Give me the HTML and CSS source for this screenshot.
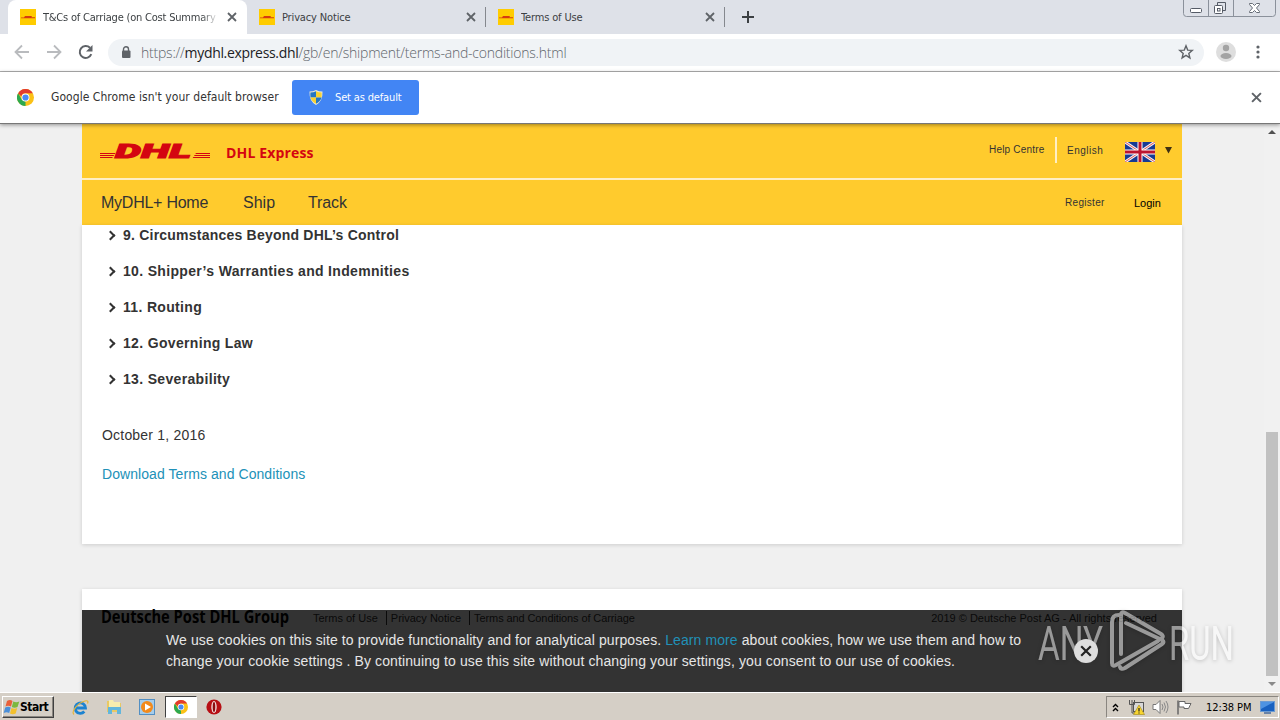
FILE: index.html
```html
<!DOCTYPE html>
<html lang="en">

<head>
    <meta charset="UTF-8">
    <meta name="viewport" content="width=device-width, initial-scale=1.0">
    <title>T&amp;Cs of Carriage (on Cost Summary)</title>
    <link rel="stylesheet" href="styles.css">
</head>

<body>

    <!-- Shared icons -->
    <svg class="defs" width="0" height="0">
        <symbol id="favicon" viewBox="0 0 16 16">
            <rect width="16" height="16" fill="#fc0" />
            <path d="M1 8.500h3l1-1.500h7l-.7 1.300H15v.9H1z" fill="#d63b10" />
        </symbol>
        <symbol id="cross" viewBox="0 0 10 10">
            <path d="M1 1l8 8M9 1L1 9" fill="none" stroke="currentColor" stroke-width="1.8" />
        </symbol>
        <symbol id="chrome" viewBox="0 0 18 18">
            <circle cx="9" cy="9" r="9" fill="#fbc116" />
            <path d="M1.200 4.500L5.100 11.300 9 13.500 9 18A9 9 0 0 1 1.200 4.500z" fill="#2da94f" />
            <path d="M1.200 4.500A9 9 0 0 1 16.800 4.500H9A4.500 4.500 0 0 0 4.700 8z" fill="#e33b2e" />
            <circle cx="9" cy="9" r="4.200" fill="#fff" />
            <circle cx="9" cy="9" r="3.300" fill="#4a8af4" />
        </symbol>
    </svg>

    <div class="tabstrip">
        <div class="tab active">
            <svg class="favicon"><use href="#favicon" /></svg>
            <span class="tab-title t1">T&amp;Cs of Carriage (on Cost Summary</span>
            <svg class="tab-close"><use href="#cross" /></svg>
        </div>
        <div class="tab">
            <svg class="favicon"><use href="#favicon" /></svg>
            <span class="tab-title">Privacy Notice</span>
            <svg class="tab-close"><use href="#cross" /></svg>
        </div>
        <div class="tab">
            <svg class="favicon"><use href="#favicon" /></svg>
            <span class="tab-title">Terms of Use</span>
            <svg class="tab-close"><use href="#cross" /></svg>
        </div>
        <svg class="new-tab" width="12" height="12" viewBox="0 0 12 12">
            <path d="M6 0v12M0 6h12" stroke="#3c4043" stroke-width="2" />
        </svg>
        <svg class="window-controls" width="93" height="17" viewBox="0 0 93 17" fill="none">
            <path d="M.5 0v13.500q0 3 3 3h86q3 0 3-3V0M25.500 0v16M50.500 0v16" stroke="#8b919b" />
            <rect x="7.500" y="8.500" width="11" height="4" rx="1" fill="#fff" stroke="#555b66" />
            <path d="M34.500 5.500v-3h8v8h-3" stroke="#555b66" />
            <rect x="31.500" y="5.500" width="8" height="8" rx="1" fill="#fff" stroke="#555b66" />
            <rect x="34.500" y="8.500" width="2.500" height="2.500" stroke="#555b66" />
            <path d="M66.500 3.500h3l2 2 2-2h3v1l-3 3.500 3 3.500v1h-3l-2-2-2 2h-3v-1l3-3.500-3-3.500z" fill="#fff" stroke="#666c76" />
        </svg>
    </div>

    <div class="toolbar">
        <svg class="nav-icon" width="16" height="16" viewBox="0 0 16 16">
            <path d="M15 8H2M8 1.500L1.500 8 8 14.500" fill="none" stroke="#b9bbbe" stroke-width="1.800" />
        </svg>
        <svg class="nav-icon" width="16" height="16" viewBox="0 0 16 16">
            <path d="M1 8h13M8 1.500L14.500 8 8 14.500" fill="none" stroke="#b9bbbe" stroke-width="1.800" />
        </svg>
        <svg class="nav-icon" width="16" height="16" viewBox="0 0 16 16">
            <path d="M13.300 10.200A6 6 0 1 1 12 3.700" fill="none" stroke="#5f6368" stroke-width="2" />
            <path d="M14.500 1v6.500H8z" fill="#5f6368" />
        </svg>
        <div class="omnibox">
            <svg width="10" height="12" viewBox="0 0 10 12">
                <path d="M2.500 5V3.300a2.500 2.500 0 0 1 5 0V5" fill="none" stroke="#5f6368" stroke-width="1.400" />
                <rect x="1" y="4.500" width="8.500" height="7.500" rx="1" fill="#5f6368" />
            </svg>
            <span class="url">https://<b>mydhl.express.dhl</b>/gb/en/shipment/terms-and-conditions.html</span>
            <svg class="star" width="16" height="16" viewBox="0 0 16 16">
                <path d="M8 1.800l1.700 4.300 4.600.3-3.500 3 1.100 4.500L8 11.400l-3.900 2.500 1.100-4.500-3.500-3 4.600-.3z" fill="none" stroke="#5f6368" stroke-width="1.400" />
            </svg>
        </div>
        <svg class="avatar" width="20" height="20" viewBox="0 0 20 20">
            <circle cx="10" cy="10" r="10" fill="#dedede" />
            <circle cx="10" cy="6" r="3.200" fill="#a3a3a3" />
            <ellipse cx="10" cy="14" rx="5.500" ry="3" fill="#a3a3a3" />
        </svg>
        <svg class="menu-dots" width="4" height="14" viewBox="0 0 4 14" fill="#5f6368">
            <circle cx="2" cy="2" r="1.600" />
            <circle cx="2" cy="7" r="1.600" />
            <circle cx="2" cy="12" r="1.600" />
        </svg>
    </div>

    <div class="infobar">
        <svg width="17" height="17"><use href="#chrome" /></svg>
        <span class="infobar-text">Google Chrome isn't your default browser</span>
        <div class="default-btn">
            <svg width="14" height="15" viewBox="0 0 14 15">
                <path d="M7 0q3 1.500 6.500 1.500Q14 11 7 15 0 11 .5 1.500 4 1.500 7 0z" fill="#e8e8d8" />
                <path d="M7 1.300V7.500H1.500Q1.200 5 1.400 2.500 4.500 2.500 7 1.300z" fill="#2476c4" />
                <path d="M7 1.300V7.500h5.500q.3-2.500.1-5Q9.500 2.500 7 1.300z" fill="#f7d232" />
                <path d="M7 13.800V7.500H1.500Q2.500 11.500 7 13.800z" fill="#f7d232" />
                <path d="M7 13.800V7.500h5.500Q11.500 11.500 7 13.800z" fill="#2476c4" />
            </svg>
            <span>Set as default</span>
        </div>
        <svg class="infobar-close" width="11" height="11"><use href="#cross" /></svg>
    </div>

    <div class="viewport">
        <div class="page">
            <header class="header">
                <svg class="dhl-logo" width="112" height="24" viewBox="0 -3 112 24" fill="#d40511">
                    <path d="M1 11h15.500l-.7 1H1zM1 13h14.200l-.7 1H1zM1 15h12.900l-.7 1H1zM97 11h14v1H96.300zM95.700 13H111v1H95zM94.400 15H111v1H93.700z" />
                    <text x="16" y="15.500" textLength="76" lengthAdjust="spacingAndGlyphs">DHL</text>
                </svg>
                <span class="brand">DHL Express</span>
                <span class="help">Help Centre</span>
                <span class="language">English</span>
                <svg class="flag" width="30" height="20" viewBox="0 0 30 20">
                    <rect width="30" height="20" fill="#173a94" />
                    <path d="M0 0l30 20M30 0L0 20" stroke="#f4f0f4" stroke-width="3" />
                    <path d="M0 0l30 20M30 0L0 20" stroke="#d9575a" stroke-width="1" />
                    <path d="M15 0v20M0 10h30" stroke="#fff" stroke-width="5" />
                    <path d="M15 0v20M0 10h30" stroke="#bd1430" stroke-width="3" />
                </svg>
                <svg class="caret" width="7" height="7" viewBox="0 0 7 7"><path d="M0 0h7L3.500 6.500z" fill="#3f3013" /></svg>
            </header>
            <nav class="main-nav">
                <span class="nav-home">MyDHL+ Home</span>
                <span class="nav-ship">Ship</span>
                <span class="nav-track">Track</span>
                <span class="register">Register</span>
                <span class="login">Login</span>
            </nav>
            <main class="content">
                <ul class="terms">
                    <li class="tight"><span>9. Circumstances Beyond DHL’s Control</span></li>
                    <li><span>10. Shipper’s Warranties and Indemnities</span></li>
                    <li><span>11. Routing</span></li>
                    <li><span>12. Governing Law</span></li>
                    <li><span>13. Severability</span></li>
                </ul>
                <p class="date">October 1, 2016</p>
                <a class="download">Download Terms and Conditions</a>
            </main>
            <footer class="footer">
                <svg class="group" width="212" height="22" viewBox="0 0 212 22">
                    <text x="0" y="16" textLength="188" lengthAdjust="spacingAndGlyphs">Deutsche Post DHL Group</text>
                </svg>
                <span class="foot-link">Terms of Use</span>
                <span class="foot-link">Privacy Notice</span>
                <span class="foot-link last">Terms and Conditions of Carriage</span>
                <span class="copyright">2019 © Deutsche Post AG - All rights reserved</span>
            </footer>
        </div>

        <div class="scrollbar">
            <svg width="8" height="4" viewBox="0 0 8 4"><path d="M0 4l4-4 4 4z" fill="#505050" /></svg>
            <div class="thumb"></div>
            <svg width="8" height="4" viewBox="0 0 8 4"><path d="M0 0l4 4 4-4z" fill="#8a8a8a" /></svg>
        </div>

        <div class="cookie-bar">
            <p>
                <span class="line1">We use cookies on this site to provide functionality and for analytical purposes. <a>Learn more</a> about cookies, how we use them and how to</span>
                <span class="line2">change your cookie settings . By continuing to use this site without changing your settings, you consent to our use of cookies.</span>
            </p>
        </div>

        <svg class="watermark" width="210" height="66" viewBox="0 0 210 66">
            <text x="4" y="51" textLength="65" lengthAdjust="spacingAndGlyphs">ANY</text>
            <text x="135" y="51" textLength="65" lengthAdjust="spacingAndGlyphs">RUN</text>
            <g fill="none" stroke-linejoin="round" stroke-linecap="round">
                <path d="M85 6q-7 0-7 7v41q0 4 4 2l42-24" />
                <path d="M87 45V6q0-4 4-2l36 21q3 2 1 4" />
                <path d="M92 14l36 17q3 2 0 4L91 59q-4 2-5-1" />
            </g>
        </svg>

        <div class="cookie-close">
            <svg width="12" height="12"><use href="#cross" /></svg>
        </div>
    </div>

    <div class="taskbar">
        <div class="start">
            <svg width="17" height="16" viewBox="0 0 17 16">
                <path d="M4 2q3-2 5.500 0L8 7.500Q5 6 2.500 7.500z" fill="#e8603a" />
                <path d="M10.300 2.500q3 1.500 6 0L14.500 8q-3 1.500-5.700 0z" fill="#7cb83e" />
                <path d="M2.200 8.500q3-1.700 5.500 0L6.200 14Q3.500 12.300.7 14z" fill="#4a8fd9" />
                <path d="M8.500 9q3 1.500 5.700 0l-1.500 5.500q-3 1.500-5.700 0z" fill="#f3c02d" />
            </svg>
            <span>Start</span>
        </div>
        <div class="task">
            <svg width="17" height="17" viewBox="0 0 17 17" fill="none">
                <path d="M4 9h9.500a5.200 5.200 0 1 0-1.200 3.500" stroke="#1d83d0" stroke-width="2.800" />
                <path d="M2 15.500C-1 13 5 4 13 2q4-1 2.500 2.500" stroke="#e5b53a" stroke-width="1.200" />
            </svg>
        </div>
        <div class="task">
            <svg width="16" height="16" viewBox="0 0 16 16">
                <path d="M1 2h5l1 2h8v9H1z" fill="#e9c964" />
                <path d="M3 1h4l1 2h6v6H3z" fill="#f7edae" />
                <path d="M2 8h13v7h-4v-4H6v4H2z" fill="#62b6dc" />
            </svg>
        </div>
        <div class="task">
            <svg width="16" height="16" viewBox="0 0 16 16">
                <rect x=".5" y=".5" width="15" height="15" fill="#a5cdeb" stroke="#528fc3" />
                <circle cx="8" cy="8" r="6" fill="#f28a1b" />
                <path d="M6 4.500v7L12 8z" fill="#fff" />
            </svg>
        </div>
        <div class="task pressed">
            <svg width="14" height="14"><use href="#chrome" /></svg>
        </div>
        <div class="task">
            <svg width="16" height="16" viewBox="0 0 16 16">
                <circle cx="8" cy="8" r="7.600" fill="#b70f14" />
                <ellipse cx="8" cy="8" rx="2.700" ry="6" fill="#f4dede" />
                <ellipse cx="8" cy="8" rx="1.300" ry="5" fill="#8c0c10" />
            </svg>
        </div>
        <div class="tray">
            <svg width="7" height="9" viewBox="0 0 7 9"><path d="M1 4l2.500-2.500L6 4M1 8l2.500-2.500L6 8" fill="none" stroke="#000" stroke-width="1.400" /></svg>
            <svg class="net" width="17" height="16" viewBox="0 0 17 16">
                <rect x="5.500" y="3.500" width="10" height="9" fill="#d8d8d8" stroke="#555" />
                <path d="M1.500 1v4.500h5V1M4 1v4M4 5.500V14h3" fill="none" stroke="#555" />
                <path d="M11 6l5.500 9.500h-11z" fill="#f8d530" stroke="#a08412" stroke-width=".6" />
                <path d="M11 9v3.500M11 13.500v1" stroke="#222" stroke-width="1.200" />
            </svg>
            <svg class="vol" width="17" height="16" viewBox="0 0 17 16">
                <path d="M1 5.500h3l4-4v13l-4-4H1z" fill="#fff" stroke="#777" />
                <path d="M10 5q2 3 0 6M12 3.500q3 4.500 0 9M14 2q4 6 0 12" fill="none" stroke="#888" />
            </svg>
            <svg class="act" width="17" height="16" viewBox="0 0 17 16">
                <path d="M2 1.500v14" stroke="#666" stroke-width="1.500" />
                <path d="M3 2.500h6v2h6l-2.500 5H8V8H3z" fill="#fff" stroke="#666" />
            </svg>
            <span class="clock">12:38 PM</span>
            <svg class="desktop" width="15" height="13" viewBox="0 0 15 13">
                <rect x=".5" y=".5" width="14" height="10" fill="#1961c0" stroke="#6c9bd2" />
                <path d="M1 1h13L1 8z" fill="#4e93e2" />
                <path d="M4 12h7" stroke="#456a9d" stroke-width="1.500" />
            </svg>
        </div>
    </div>

</body>

</html>
```
FILE: styles.css
```css
* {
    box-sizing: border-box;
}

body {
    width: 1280px;
    height: 720px;
    margin: 0;
    overflow: hidden;
    display: flex;
    flex-direction: column;
    font-family: "Liberation Sans", Arial, sans-serif;
    background-color: #fff;
    color: #333;
    white-space: nowrap;
}

svg {
    display: block;
    flex: none;
}

.defs {
    position: absolute;
}

/* Browser window */
.tabstrip {
    flex: none;
    height: 34px;
    padding-left: 8px;
    display: flex;
    background-color: #dee1e8;
}

.tab {
    width: 239px;
    height: 34px;
    padding: 0 10px 0 12px;
    display: flex;
    align-items: center;
    font: 11px "DejaVu Sans Condensed", "DejaVu Sans", sans-serif;
    color: #3c4043;
    background: linear-gradient(#85888e, #85888e) right center / 1px 20px no-repeat;
}

.tab.active {
    background: #fff;
    border-radius: 8px 8px 0 0;
}

.favicon {
    width: 16px;
    height: 16px;
    margin-right: 7px;
}

.tab-title {
    width: 174px;
    overflow: hidden;
    letter-spacing: -0.15px;
}

.t1 {
    -webkit-mask-image: linear-gradient(90deg, #000 158px, transparent 176px);
    letter-spacing: -0.2px;
}

.tab-close {
    width: 10px;
    height: 10px;
    margin-left: 10px;
    color: #5f6368;
}

.new-tab {
    margin: 11px 0 0 17px;
}

.window-controls {
    margin: 0 4px 0 auto;
}

.toolbar {
    flex: none;
    height: 38px;
    display: flex;
    align-items: center;
    padding: 0 20px 1px 14px;
    border-bottom: 1px solid #b1b1b1;
}

.nav-icon {
    margin-right: 16px;
}

.omnibox {
    width: 1096px;
    height: 27px;
    margin-left: -2px;
    padding: 0 10px 0 13px;
    border-radius: 14px;
    background-color: #f0f3f6;
    display: flex;
    align-items: center;
}

.url {
    margin-left: 10px;
    font: 300 14px "Open Sans", sans-serif;
    letter-spacing: -0.22px;
    color: #5f656b;
}

.url b {
    font-weight: 400;
    letter-spacing: -0.33px;
    color: #202124;
}

.star {
    margin-left: auto;
}

.avatar {
    margin-left: 12px;
}

.menu-dots {
    margin-left: 20px;
}

.infobar {
    flex: none;
    height: 52px;
    display: flex;
    align-items: center;
    padding: 0 18px 0 17px;
    border-bottom: 1px solid #777;
    position: relative;
    z-index: 2;
    background-color: #fff;
    box-shadow: 0 1px 4px rgba(0, 0, 0, 0.4);
}

.infobar-text {
    width: 228px;
    margin: 0 13px 0 17px;
    padding-bottom: 1px;
    font: 12px "DejaVu Sans Condensed", sans-serif;
    letter-spacing: 0.05px;
}

.default-btn {
    width: 127px;
    height: 35px;
    padding-left: 17px;
    display: flex;
    align-items: center;
    gap: 12px;
    border-radius: 3px;
    background-color: #4285f4;
    font: 11px "DejaVu Sans Condensed", sans-serif;
    letter-spacing: -0.15px;
    color: #fff;
}

.infobar-close {
    margin-left: auto;
    color: #5f6368;
}

/* DHL page */
.viewport {
    position: relative;
    flex: none;
    height: 568px;
    overflow: hidden;
    background-color: #f0f0f0;
}

.page {
    width: 1100px;
    margin-left: 82px;
}

.header {
    height: 56px;
    padding: 0 10px 0 17px;
    display: flex;
    align-items: center;
    background-color: #ffcb2d;
    border-bottom: 2px solid #ffefc4;
}

.dhl-logo text {
    font: italic 900 20px "Roboto", sans-serif;
    stroke: #d40511;
    stroke-width: 1px;
}

.brand {
    margin: 3px 0 0 15px;
    font: 700 14px "Open Sans", sans-serif;
    letter-spacing: 0.15px;
    color: #d40511;
}

.help,
.language,
.register,
.login {
    font-size: 10px;
    letter-spacing: 0.3px;
}

.help {
    height: 26px;
    line-height: 26px;
    width: 68px;
    margin: -2px 0 0 auto;
    border-right: 2px solid #ffefc4;
    letter-spacing: 0.2px;
}

.language {
    width: 68px;
    margin-top: -1px;
    padding-left: 10px;
    letter-spacing: 0.5px;
}

.flag {
    border-radius: 1px;
    margin-top: 2px;
}

.caret {
    margin: -2px 0 0 10px;
}

.main-nav {
    height: 45px;
    padding: 0 19px 0 19px;
    display: flex;
    align-items: center;
    background-color: #ffcb2d;
    font-size: 16px;
}

.nav-home {
    width: 107px;
    letter-spacing: -0.25px;
}

.nav-ship {
    width: 65px;
    margin-left: 35px;
}

.nav-track {
    letter-spacing: -0.1px;
}

.register {
    width: 39px;
    margin-left: auto;
}

.login {
    width: 29px;
    margin-left: 30px;
    font-size: 11px;
    letter-spacing: 0;
    color: #000;
}

.content {
    height: 319px;
    padding-left: 20px;
    background-color: #fff;
    box-shadow: 0 1px 4px rgba(0, 0, 0, 0.15);
    font-size: 14px;
}

.terms {
    margin: 0;
    padding: 0;
    list-style: none;
    position: relative;
    top: -8px;
}

.terms li {
    height: 36px;
    display: flex;
    align-items: center;
    font-weight: bold;
    letter-spacing: 0.33px;
}

.terms .tight {
    letter-spacing: 0.22px;
}

.terms li::before {
    content: "";
    width: 5px;
    height: 5px;
    margin: 0 9px 0 5px;
    border: solid #333;
    border-width: 2px 2px 0 0;
    transform: rotate(45deg);
}

.date {
    margin: 22px 0 23px;
    line-height: 16px;
    letter-spacing: 0.2px;
}

.download {
    color: #2191b8;
    line-height: 16px;
    letter-spacing: 0.07px;
}

.footer {
    height: 110px;
    margin-top: 45px;
    padding: 18px 25px 0 19px;
    display: flex;
    align-items: flex-start;
    background-color: #fff;
    box-shadow: 0 1px 4px rgba(0, 0, 0, 0.15);
    font-size: 11px;
}

.group text {
    font: 700 17px "Open Sans", sans-serif;
    fill: #000;
}

.foot-link,
.copyright {
    line-height: 14px;
    margin-top: 4px;
}

.foot-link {
    padding-right: 8px;
    margin-right: 4px;
    border-right: 1px solid #333;
}

.last {
    border: 0;
    letter-spacing: -0.1px;
}

.copyright {
    margin-left: auto;
}

.scrollbar {
    position: absolute;
    top: 0;
    right: 0;
    width: 16px;
    height: 568px;
    padding: 6px 0;
    display: flex;
    flex-direction: column;
    align-items: center;
    background-color: #f1f1f1;
}

.thumb {
    width: 12px;
    height: 244px;
    margin: auto 0 6px;
    background-color: #c1c1c1;
}

.cookie-bar {
    position: absolute;
    left: 82px;
    bottom: 0;
    width: 1100px;
    height: 82px;
    padding: 20px 0 0 84px;
    background-color: rgba(0, 0, 0, 0.8);
    font-size: 14px;
    line-height: 21px;
    color: #e6e6e6;
}

.cookie-bar p {
    margin: 0;
}

.cookie-bar span {
    display: block;
}

.line1 {
    letter-spacing: 0.093px;
}

.line2 {
    letter-spacing: 0.11px;
}

.cookie-bar a {
    color: #2191b8;
}

.watermark {
    position: absolute;
    left: 1034px;
    top: 485px;
    opacity: 0.5;
    filter: drop-shadow(0 1px 2px rgba(0, 0, 0, 0.4));
}

.watermark text {
    font: 400 49px "Roboto", sans-serif;
    fill: #fff;
}

.watermark g {
    stroke: #fff;
    stroke-width: 4px;
}

.cookie-close {
    position: absolute;
    left: 1074px;
    top: 515px;
    width: 24px;
    height: 24px;
    border-radius: 50%;
    display: grid;
    place-items: center;
    background-color: #ddd;
    color: #222;
}

/* Taskbar */
.taskbar {
    flex: none;
    height: 28px;
    padding: 1px 1px 0 2px;
    display: flex;
    align-items: center;
    border-top: 1px solid #fff;
    background-color: #d5cfc6;
    font-family: "DejaVu Sans Condensed", sans-serif;
    color: #000;
}

.start {
    width: 52px;
    height: 22px;
    margin-right: 10px;
    display: flex;
    align-items: center;
    border: 1px solid;
    border-color: #fff #404040 #404040 #fff;
    box-shadow: inset -1px -1px #8a8680;
    font-size: 12px;
    font-weight: bold;
    letter-spacing: -0.5px;
}

.task {
    width: 32px;
    height: 22px;
    margin-right: 1.6px;
    display: grid;
    place-items: center;
}

.pressed {
    background-color: #fff;
    border: 1px solid;
    border-color: #404040 #fff #fff #404040;
}

.tray {
    width: 173px;
    height: 22px;
    margin-left: auto;
    padding-left: 5px;
    display: flex;
    align-items: center;
    border: 1px solid;
    border-color: #8a8680 #fff #fff #8a8680;
    font-size: 11px;
}

.net {
    margin-left: 9px;
}

.vol {
    margin-left: 7px;
}

.act {
    margin-left: 7px;
}

.clock {
    width: 54px;
    margin-left: 13px;
    letter-spacing: -0.1px;
}
```
